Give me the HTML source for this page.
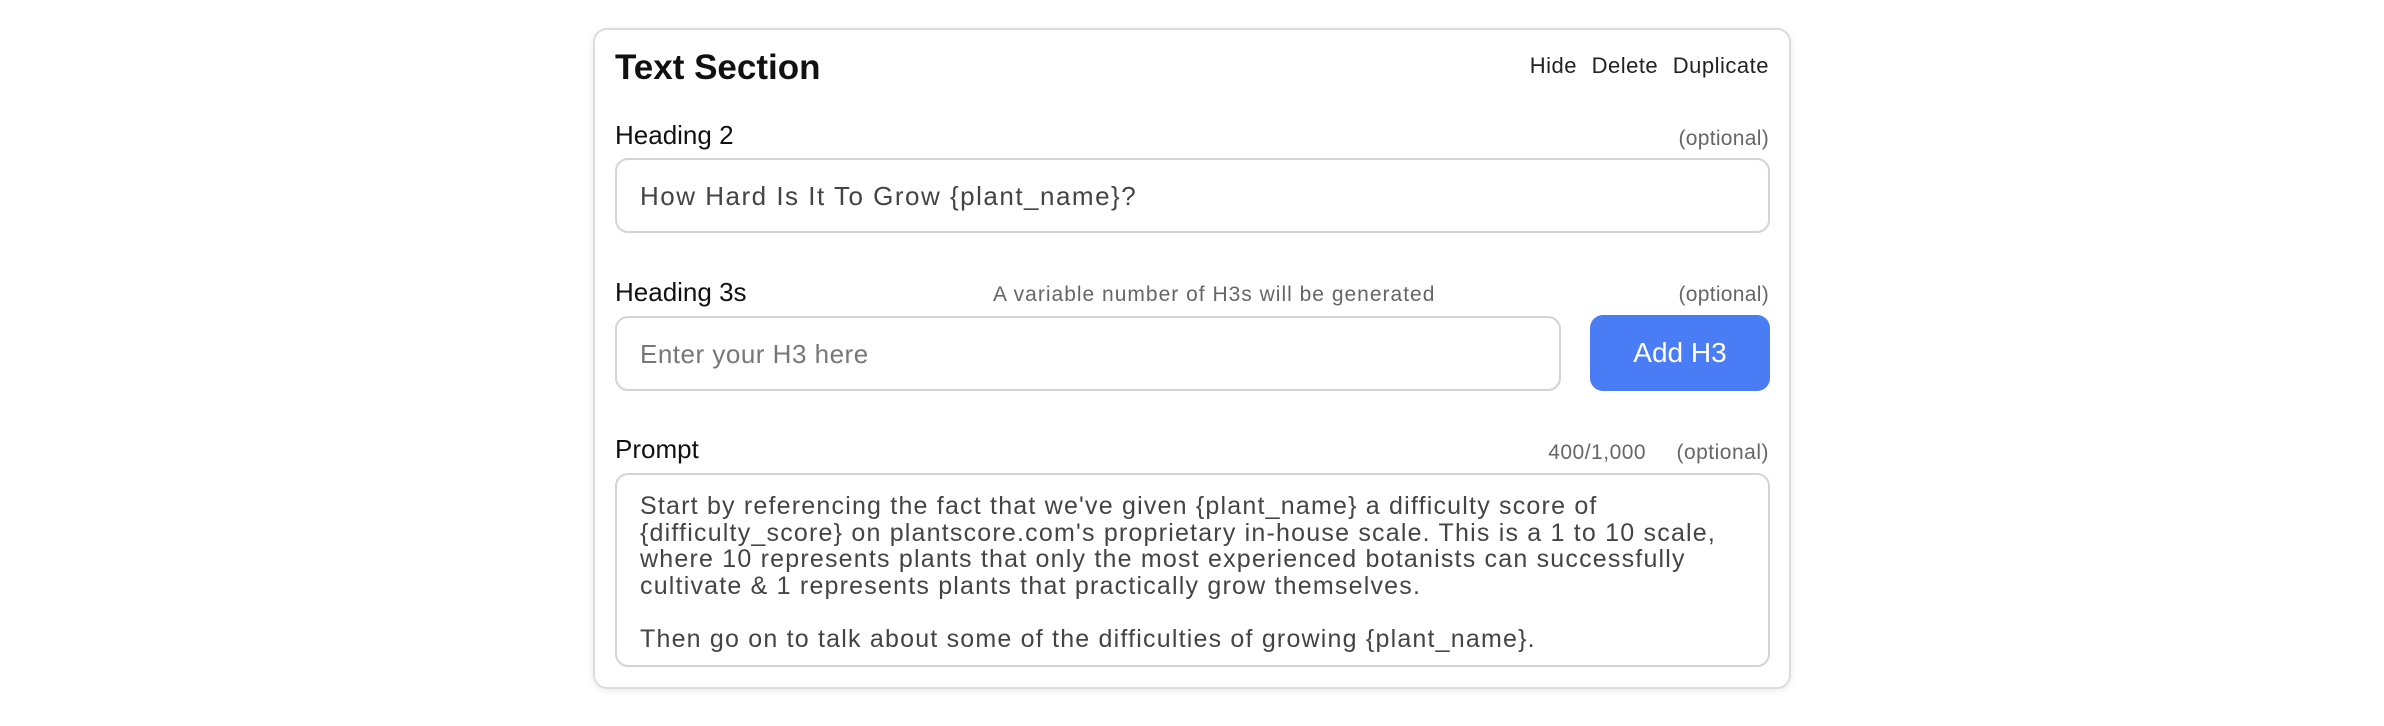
<!DOCTYPE html>
<html><head><style>
*{margin:0;padding:0;box-sizing:border-box}
body{width:2384px;height:726px;background:#fff;font-family:"Liberation Sans",sans-serif;position:relative;overflow:hidden}
.card{position:absolute;left:593px;top:28px;width:1198px;height:661px;border:2px solid #dcdcdc;border-radius:14px;box-shadow:0 2px 8px rgba(0,0,0,0.08)}
.a{position:absolute;white-space:nowrap;line-height:1}
.box{position:absolute;border:2px solid #d4d4d4;border-radius:13px;background:#fff}
</style></head><body>
<div class="card"></div>
<div class="a" style="left:615px;top:50px;font-size:35px;font-weight:bold;color:#111">Text Section</div>
<div class="a" style="right:615px;top:55px;font-size:22px;color:#222;word-spacing:8px;letter-spacing:0.5px">Hide Delete Duplicate</div>

<div class="a" style="left:615px;top:122px;font-size:26px;color:#111">Heading 2</div>
<div class="a" style="right:615px;top:128px;font-size:21px;color:#666;letter-spacing:0.3px">(optional)</div>
<div class="box" style="left:615px;top:158px;width:1155px;height:75px"></div>
<div class="a" style="left:640px;top:183px;font-size:26px;color:#444;letter-spacing:1.5px">How Hard Is It To Grow {plant_name}?</div>

<div class="a" style="left:615px;top:279px;font-size:26px;color:#111">Heading 3s</div>
<div class="a" style="left:993px;top:284px;font-size:21px;color:#666;letter-spacing:1px">A variable number of H3s will be generated</div>
<div class="a" style="right:615px;top:284px;font-size:21px;color:#666;letter-spacing:0.3px">(optional)</div>
<div class="box" style="left:615px;top:316px;width:946px;height:75px"></div>
<div class="a" style="left:640px;top:341px;font-size:26px;color:#777;letter-spacing:0.5px">Enter your H3 here</div>
<div style="position:absolute;left:1590px;top:315px;width:180px;height:76px;background:#4a7cf5;border-radius:13px;color:#fff;font-size:28px;text-align:center;line-height:76px">Add H3</div>

<div class="a" style="left:615px;top:436px;font-size:26px;color:#111">Prompt</div>
<div class="a" style="right:615px;top:442px;font-size:21px;color:#666;word-spacing:24px;letter-spacing:0.5px">400/1,000 (optional)</div>
<div class="box" style="left:615px;top:473px;width:1155px;height:194px"></div>
<div style="position:absolute;left:640px;top:493px;font-size:25px;line-height:26.5px;color:#444;letter-spacing:1.2px;white-space:nowrap">Start by referencing the fact that we've given {plant_name} a difficulty score of<br>{difficulty_score} on plantscore.com's proprietary in-house scale. This is a 1 to 10 scale,<br>where 10 represents plants that only the most experienced botanists can successfully<br>cultivate &amp; 1 represents plants that practically grow themselves.<br><br>Then go on to talk about some of the difficulties of growing {plant_name}.</div>
</body></html>
